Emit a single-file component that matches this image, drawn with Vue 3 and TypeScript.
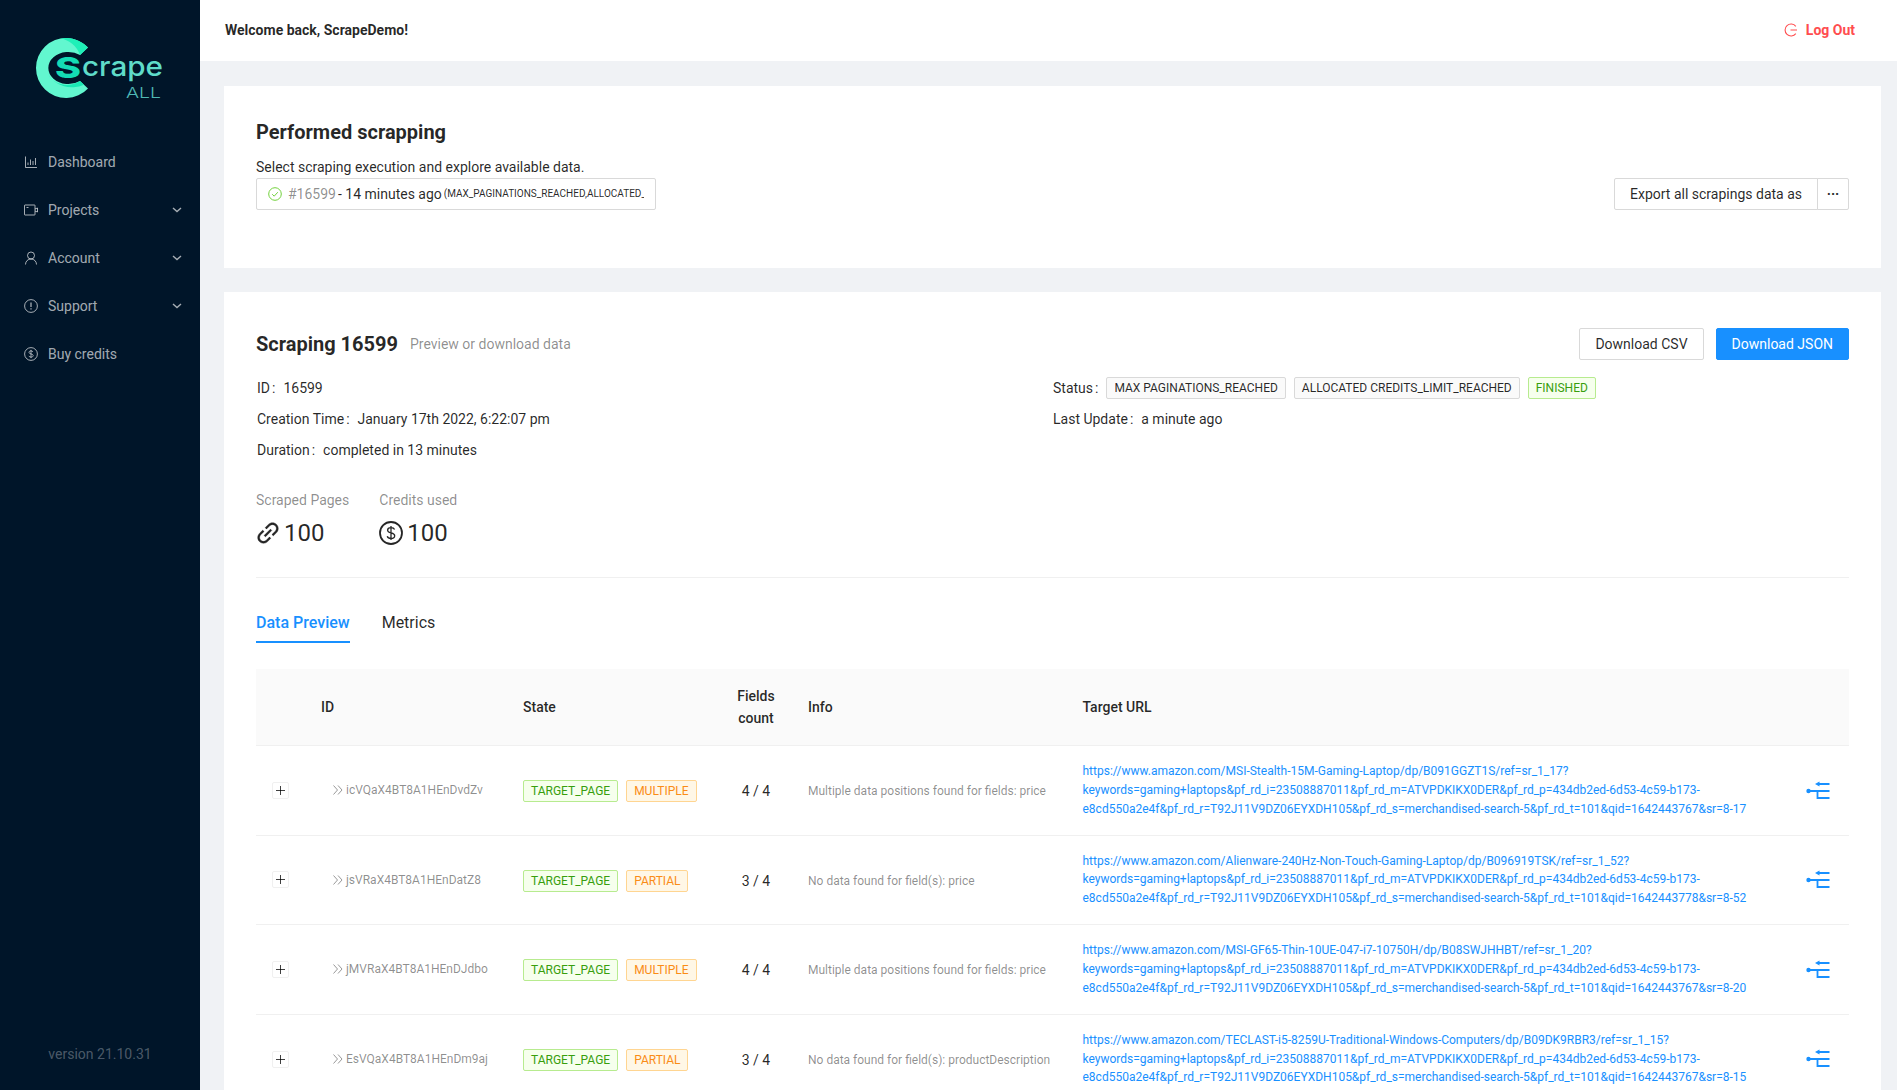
<script setup lang="ts">
interface Row {
  id: string
  extra: string
  kind: string
  fields: string
  info: string
  lines: string[]
}
const keywords = 'keywords=gaming+laptops&pf_rd_i=23508887011&pf_rd_m=ATVPDKIKX0DER&pf_rd_p=434db2ed-6d53-4c59-b173-'
const tail = 'e8cd550a2e4f&pf_rd_r=T92J11V9DZ06EYXDH105&pf_rd_s=merchandised-search-5&pf_rd_t=101&qid='
const rows: Row[] = [
  { id: 'icVQaX4BT8A1HEnDvdZv', extra: 'MULTIPLE', kind: 'multi', fields: '4 / 4', info: 'Multiple data positions found for fields: price',
    lines: ['https://www.amazon.com/MSI-Stealth-15M-Gaming-Laptop/dp/B091GGZT1S/ref=sr_1_17?', keywords, tail + '1642443767&sr=8-17'] },
  { id: 'jsVRaX4BT8A1HEnDatZ8', extra: 'PARTIAL', kind: 'partial', fields: '3 / 4', info: 'No data found for field(s): price',
    lines: ['https://www.amazon.com/Alienware-240Hz-Non-Touch-Gaming-Laptop/dp/B096919TSK/ref=sr_1_52?', keywords, tail + '1642443778&sr=8-52'] },
  { id: 'jMVRaX4BT8A1HEnDJdbo', extra: 'MULTIPLE', kind: 'multi', fields: '4 / 4', info: 'Multiple data positions found for fields: price',
    lines: ['https://www.amazon.com/MSI-GF65-Thin-10UE-047-i7-10750H/dp/B08SWJHHBT/ref=sr_1_20?', keywords, tail + '1642443767&sr=8-20'] },
  { id: 'EsVQaX4BT8A1HEnDm9aj', extra: 'PARTIAL', kind: 'partial', fields: '3 / 4', info: 'No data found for field(s): productDescription',
    lines: ['https://www.amazon.com/TECLAST-i5-8259U-Traditional-Windows-Computers/dp/B09DK9RBR3/ref=sr_1_15?', keywords, tail + '1642443767&sr=8-15'] }
]
const linkPath = 'M574 665.4a8.03 8.03 0 0 0-11.3 0L446.5 781.6c-53.8 53.8-144.6 59.5-204 0-59.5-59.5-53.8-150.2 0-204l116.2-116.2c3.1-3.1 3.1-8.2 0-11.3l-39.8-39.8a8.03 8.03 0 0 0-11.3 0L191.4 526.5c-84.6 84.6-84.6 221.5 0 306s221.5 84.6 306 0l116.2-116.2c3.1-3.1 3.1-8.2 0-11.3L574 665.4zm258.6-474c-84.6-84.6-221.5-84.6-306 0L410.3 307.6a8.03 8.03 0 0 0 0 11.3l39.7 39.7c3.1 3.1 8.2 3.1 11.3 0l116.2-116.2c53.8-53.8 144.6-59.5 204 0 59.5 59.5 53.8 150.2 0 204L665.3 562.6a8.03 8.03 0 0 0 0 11.3l39.8 39.8c3.1 3.1 8.2 3.1 11.3 0l116.2-116.2c84.5-84.6 84.5-221.5 0-306.1zM610.1 372.3a8.03 8.03 0 0 0-11.3 0L372.3 598.7a8.03 8.03 0 0 0 0 11.3l39.6 39.6c3.1 3.1 8.2 3.1 11.3 0l226.4-226.4c3.1-3.1 3.1-8.2 0-11.3l-39.5-39.6z'
</script>

<template>
  <div class="layout">
    <aside class="sider">
      <div class="logo">
        <svg width="200" height="142" viewBox="0 0 200 142">
          <path d="M88 47.6A30 30 0 1 0 88 88.4L80 81A20 16 0 1 1 80 55Z" fill="#62f7cf" />
          <path d="M88 47.6A30 30 0 0 0 60 38.600A24 26 0 0 1 80 55Z" fill="#1ff0b8" />
          <path d="M80 81A20 16 0 0 1 48 74A26 22 0 0 0 84 84.700Z" fill="#1ae8b4" />
          <text x="55" y="78" class="logo-s" textLength="26" lengthAdjust="spacingAndGlyphs">S</text>
          <text x="82" y="76" class="logo-crape" textLength="81" lengthAdjust="spacingAndGlyphs">crape</text>
          <text x="126" y="97.5" class="logo-all" textLength="35" lengthAdjust="spacingAndGlyphs">ALL</text>
        </svg>
      </div>
      <nav class="menu">
        <div class="item">
          <svg class="mi" viewBox="0 0 14 14" fill="none" stroke="currentColor"><path d="M1.5 1.5v11h11.500M4 10V7.500M6.500 10V4.500M9 10V6M11.500 10V3" /></svg>
          <span>Dashboard</span>
        </div>
        <div class="item">
          <svg class="mi" viewBox="0 0 14 14" fill="none" stroke="currentColor"><rect x="0.500" y="2" width="10.500" height="10" rx="0.500" /><path d="M2.500 4.500h2M11 6l2.500-1v4L11 8" /></svg>
          <span>Projects</span>
          <svg class="chev" viewBox="0 0 10 6" fill="none" stroke="currentColor" stroke-width="1.400"><path d="M1 1l4 3.600L9 1" /></svg>
        </div>
        <div class="item">
          <svg class="mi" viewBox="0 0 14 14" fill="none" stroke="currentColor"><circle cx="7" cy="4.500" r="3.500" /><path d="M1.500 13.500c0-3.200 2.400-5.500 5.500-5.500s5.500 2.300 5.500 5.500" /></svg>
          <span>Account</span>
          <svg class="chev" viewBox="0 0 10 6" fill="none" stroke="currentColor" stroke-width="1.400"><path d="M1 1l4 3.600L9 1" /></svg>
        </div>
        <div class="item">
          <svg class="mi" viewBox="0 0 14 14" fill="none" stroke="currentColor"><circle cx="7" cy="7" r="6.400" /><path d="M7 3.500v4.500M7 9.300v1.200" stroke-width="1.300" /></svg>
          <span>Support</span>
          <svg class="chev" viewBox="0 0 10 6" fill="none" stroke="currentColor" stroke-width="1.400"><path d="M1 1l4 3.600L9 1" /></svg>
        </div>
        <div class="item">
          <svg class="mi" viewBox="0 0 14 14" fill="none" stroke="currentColor"><circle cx="7" cy="7" r="6.400" /><path d="M9 5c-.4-.8-1.100-1.100-2-1.100-1.200 0-2 .6-2 1.500 0 2.100 4.200 1 4.200 3.200 0 .9-.9 1.500-2.200 1.500-1 0-1.800-.4-2.200-1.200M7 2.900v8.200" stroke-width="0.900" /></svg>
          <span>Buy credits</span>
        </div>
      </nav>
      <div class="version">version 21.10.31</div>
    </aside>

    <div class="main">
      <header class="topbar">
        <strong class="welcome">Welcome back, ScrapeDemo!</strong>
        <a class="logout">
          <svg class="logout-icon" viewBox="0 0 14 14" fill="none" stroke="currentColor" stroke-width="1.100"><path d="M11.800 3.300A6 6 0 1 0 11.800 10.700M6.500 7h6.500" /></svg>
          <span>Log Out</span>
        </a>
      </header>

      <section class="card first">
        <div class="first-left">
          <h2 class="title">Performed scrapping</h2>
          <p class="select-label">Select scraping execution and explore available data.</p>
          <div class="select">
            <svg class="check" viewBox="0 0 14 14" fill="none" stroke="#73d13d" stroke-width="1"><circle cx="7" cy="7" r="6.300" /><path d="M4.200 7.200l2 2 3.600-4" /></svg>
            <span class="select-id">#16599</span>
            <span class="select-time">- 14 minutes ago</span>
            <span class="select-small">(MAX_PAGINATIONS_REACHED,ALLOCATED_CREDITS_LIMIT_REACHED,FINISHED)</span>
          </div>
        </div>
        <div class="export">
          <button class="export-main">Export all scrapings data as</button>
          <button class="export-more">···</button>
        </div>
      </section>

      <section class="card second">
        <div class="head">
          <h2 class="title">Scraping 16599</h2>
          <span class="subtitle">Preview or download data</span>
          <div class="head-actions">
            <button class="btn">Download CSV</button>
            <button class="btn primary">Download JSON</button>
          </div>
        </div>

        <div class="desc">
          <div class="desc-col">
            <div class="desc-row"><span class="lbl">ID</span><span>16599</span></div>
            <div class="desc-row"><span class="lbl">Creation Time</span><span>January 17th 2022, 6:22:07 pm</span></div>
            <div class="desc-row"><span class="lbl">Duration</span><span>completed in 13 minutes</span></div>
          </div>
          <div class="desc-col right">
            <div class="desc-row">
              <span class="lbl">Status</span>
              <span class="tag">MAX PAGINATIONS_REACHED</span>
              <span class="tag">ALLOCATED CREDITS_LIMIT_REACHED</span>
              <span class="tag green">FINISHED</span>
            </div>
            <div class="desc-row"><span class="lbl">Last Update</span><span>a minute ago</span></div>
          </div>
        </div>

        <div class="stats">
          <div class="stat">
            <div class="stat-label">Scraped Pages</div>
            <div class="stat-value">
              <svg class="stat-icon" viewBox="64 64 896 896" fill="currentColor" stroke="currentColor" stroke-width="14"><path :d="linkPath" /></svg>
              <span>100</span>
            </div>
          </div>
          <div class="stat">
            <div class="stat-label">Credits used</div>
            <div class="stat-value">
              <svg class="stat-icon" viewBox="0 0 24 24" fill="none" stroke="currentColor"><circle cx="12" cy="12" r="11" stroke-width="1.800" /><path d="M15.600 8.600c-.5-1.300-1.800-2-3.600-2-2 0-3.400 1-3.400 2.600 0 3.700 7.100 1.800 7.100 5.600 0 1.600-1.500 2.700-3.700 2.700-1.900 0-3.300-.8-3.800-2.200M12 5v14" stroke-width="1.300" /></svg>
              <span>100</span>
            </div>
          </div>
        </div>

        <div class="divider"></div>

        <div class="tabs">
          <span class="tab active">Data Preview</span>
          <span class="tab">Metrics</span>
        </div>

        <table class="table">
          <colgroup>
            <col class="c1" /><col class="c2" /><col class="c3" /><col class="c4" /><col class="c5" /><col class="c6" /><col />
          </colgroup>
          <thead>
            <tr>
              <th></th>
              <th>ID</th>
              <th>State</th>
              <th class="center">Fields count</th>
              <th>Info</th>
              <th>Target URL</th>
              <th></th>
            </tr>
          </thead>
          <tbody>
            <tr v-for="r in rows" :key="r.id">
              <td class="expand-cell"><span class="expand"></span></td>
              <td class="id-cell">
                <svg class="dbl" viewBox="0 0 12 12" fill="none" stroke="currentColor" stroke-width="0.900"><path d="M1.500 1.500l4 4.500-4 4.500M6 1.500l4 4.500-4 4.500" /></svg>
                <span>{{ r.id }}</span>
              </td>
              <td>
                <div class="state">
                  <span class="tag green">TARGET_PAGE</span>
                  <span class="tag" :class="r.kind">{{ r.extra }}</span>
                </div>
              </td>
              <td class="center fields">{{ r.fields }}</td>
              <td class="info">{{ r.info }}</td>
              <td class="url"><span v-for="l in r.lines" :key="l" class="url-line">{{ l }}</span></td>
              <td class="action">
                <svg class="branch" viewBox="0 0 24 18" fill="none" stroke="#1890ff" stroke-width="1.800">
                  <circle cx="2.500" cy="9" r="2.200" fill="#1890ff" stroke="none" />
                  <path d="M3 9h20.500M11.500 9v7h12M11 2h12.500" />
                  <path d="M9 2l4.500-2.600v5.200z" fill="#1890ff" stroke="none" />
                </svg>
              </td>
            </tr>
          </tbody>
        </table>
      </section>
    </div>
  </div>
</template>

<style>
html, body { margin: 0; height: 100%; overflow: hidden; }
</style>

<style scoped>
* { box-sizing: border-box; }
.layout {
  display: flex;
  height: 1090px;
  overflow: hidden;
  font-family: Roboto, "Liberation Sans", sans-serif;
  font-size: 14px;
  line-height: 22px;
  color: rgba(0, 0, 0, 0.85);
  background: #f0f2f5;
}
.sider {
  flex: 0 0 200px;
  width: 200px;
  background: #001529;
  display: flex;
  flex-direction: column;
  color: rgba(255, 255, 255, 0.65);
}
.logo { height: 142px; flex: none; }
.logo svg { display: block; }
.logo-s { font: 800 29px Inter, sans-serif; fill: #14dcb4; }
.logo-crape { font: 500 27.500px Inter, sans-serif; fill: #5fdcc9; }
.logo-all { font: 300 14.500px Inter, sans-serif; fill: #4fb8b4; }
.menu { flex: 1; }
.item {
  height: 40px;
  margin-bottom: 8px;
  padding: 0 18px 0 24px;
  display: flex;
  align-items: center;
}
.mi { width: 14px; height: 14px; margin-right: 10px; flex: none; }
.chev { width: 10px; height: 6px; margin-left: auto; }
.version {
  height: 22px;
  margin-bottom: 25px;
  text-align: center;
  color: rgba(255, 255, 255, 0.3);
}
.main { flex: 1; min-width: 0; }
.topbar {
  height: 61px;
  background: #fff;
  display: flex;
  align-items: center;
  padding: 0 42px 2px 25px;
}
.welcome { font-weight: 700; color: rgba(0, 0, 0, 0.85); }
.logout {
  margin-left: auto;
  display: flex;
  align-items: center;
  color: #ff4d4f;
  font-weight: 700;
}
.logout-icon { width: 14px; height: 14px; margin-right: 8px; }
.card {
  background: #fff;
  margin: 25px 16px 0 24px;
  padding-left: 32px;
  padding-right: 32px;
}
.first {
  display: flex;
  justify-content: space-between;
  align-items: flex-end;
  padding-top: 32px;
  padding-bottom: 58px;
}
.second { margin-top: 24px; padding-top: 36px; padding-bottom: 32px; }
.title {
  margin: 0;
  font-size: 20px;
  line-height: 28px;
  font-weight: 700;
  color: rgba(0, 0, 0, 0.85);
}
.select-label { margin: 10px 0 0; }
.select {
  width: 400px;
  height: 32px;
  border: 1px solid #d9d9d9;
  border-radius: 2px;
  display: flex;
  align-items: center;
  padding: 0 11px;
  overflow: hidden;
  white-space: nowrap;
}
.check { width: 14px; height: 14px; margin-right: 6px; flex: none; }
.select-id { color: rgba(0, 0, 0, 0.45); }
.select-time { margin-left: 2px; margin-right: 2px; }
.select-small { font-size: 10px; overflow: hidden; }
.export { display: flex; }
.export button {
  height: 32px;
  background: #fff;
  border: 1px solid #d9d9d9;
  font: 14px/22px Roboto, sans-serif;
  color: rgba(0, 0, 0, 0.85);
  padding: 0;
}
.export-main { width: 204px; border-radius: 2px 0 0 2px; }
.export-more { width: 32px; margin-left: -1px; border-radius: 0 2px 2px 0; font-weight: 700 !important; }
.head { display: flex; align-items: center; height: 32px; margin-bottom: 17px; }
.subtitle { margin-left: 12px; color: rgba(0, 0, 0, 0.45); }
.head-actions { margin-left: auto; display: flex; gap: 12px; }
.btn {
  height: 32px;
  padding: 0 15px;
  background: #fff;
  border: 1px solid #d9d9d9;
  border-radius: 2px;
  font: 14px/22px Roboto, sans-serif;
  color: rgba(0, 0, 0, 0.85);
}
.btn.primary {
  background: #1890ff;
  border-color: #1890ff;
  color: #fff;
  padding: 0 15px;
}
.desc { display: flex; }
.desc-col { flex: 0 0 797px; display: flex; flex-direction: column; gap: 9px; padding-left: 1px; }
.desc-col.right { padding-left: 0; }
.desc-row { display: flex; align-items: center; height: 22px; }
.lbl::after { content: ":"; margin: 0 8px 0 2px; }
.tag {
  height: 22px;
  line-height: 20px;
  font-size: 12px;
  padding: 0 7px;
  border: 1px solid #d9d9d9;
  border-radius: 2px;
  background: #fafafa;
  color: rgba(0, 0, 0, 0.85);
  margin-right: 8px;
  white-space: nowrap;
}
.tag.green { background: #f6ffed; border-color: #b7eb8f; color: #389e0d; }
.tag.multi, .tag.partial { background: #fff7e6; border-color: #ffd591; color: #fa8c16; }
.stats { display: flex; margin-top: 28px; gap: 30px; }
.stat-label { color: rgba(0, 0, 0, 0.45); margin-bottom: 4px; }
.stat-value { display: flex; align-items: center; font-size: 24px; line-height: 36px; }
.stat-icon { width: 24px; height: 24px; margin-right: 4px; }
.divider { height: 1px; background: #f0f0f0; margin-top: 26px; }
.tabs { display: flex; gap: 32px; margin-top: 33px; font-size: 16px; line-height: 24px; }
.tab { padding-bottom: 6px; border-bottom: 2px solid transparent; }
.tab.active { color: #1890ff; font-weight: 500; border-bottom-color: #1890ff; }
.table {
  width: 100%;
  margin-top: 26px;
  border-collapse: collapse;
  table-layout: fixed;
}
.c1 { width: 49px; }
.c2 { width: 202px; }
.c3 { width: 215px; }
.c4 { width: 70px; }
.c5 { width: 274.500px; }
.c6 { width: 713px; }
th {
  background: #fafafa;
  font-weight: 500;
  text-align: left;
  padding: 16px;
  border-bottom: 1px solid #f0f0f0;
}
td {
  padding: 16px;
  border-bottom: 1px solid #f0f0f0;
  vertical-align: middle;
}
th.center, td.center { text-align: center; padding-left: 7px; padding-right: 9px; }
.expand-cell { padding: 0 0 0 16px; }
.expand {
  display: block;
  position: relative;
  width: 17px;
  height: 17px;
  border: 1px solid #f0f0f0;
  border-radius: 2px;
}
.expand::before, .expand::after {
  content: "";
  position: absolute;
  background: rgba(0, 0, 0, 0.75);
}
.expand::before { left: 3px; right: 3px; top: 7px; height: 1px; }
.expand::after { top: 3px; bottom: 3px; left: 7px; width: 1px; }
.id-cell { font-size: 12px; color: rgba(0, 0, 0, 0.45); padding-left: 27px; padding-right: 0; white-space: nowrap; }
.dbl { width: 12px; height: 12px; margin-right: 2px; vertical-align: -2px; }
.state { display: flex; padding-top: 2px; }
td.fields, td.info { padding-top: 18px; }
.fields { white-space: nowrap; }
.info { font-size: 12px; color: rgba(0, 0, 0, 0.45); padding-right: 0; white-space: nowrap; }
.url { font-size: 12px; line-height: 18.860px; color: #1890ff; }
.url-line { display: block; white-space: nowrap; }
.action { padding: 0 19px 2px 0; text-align: right; }
.branch { width: 24px; height: 18px; display: inline-block; vertical-align: middle; overflow: visible; }
</style>
